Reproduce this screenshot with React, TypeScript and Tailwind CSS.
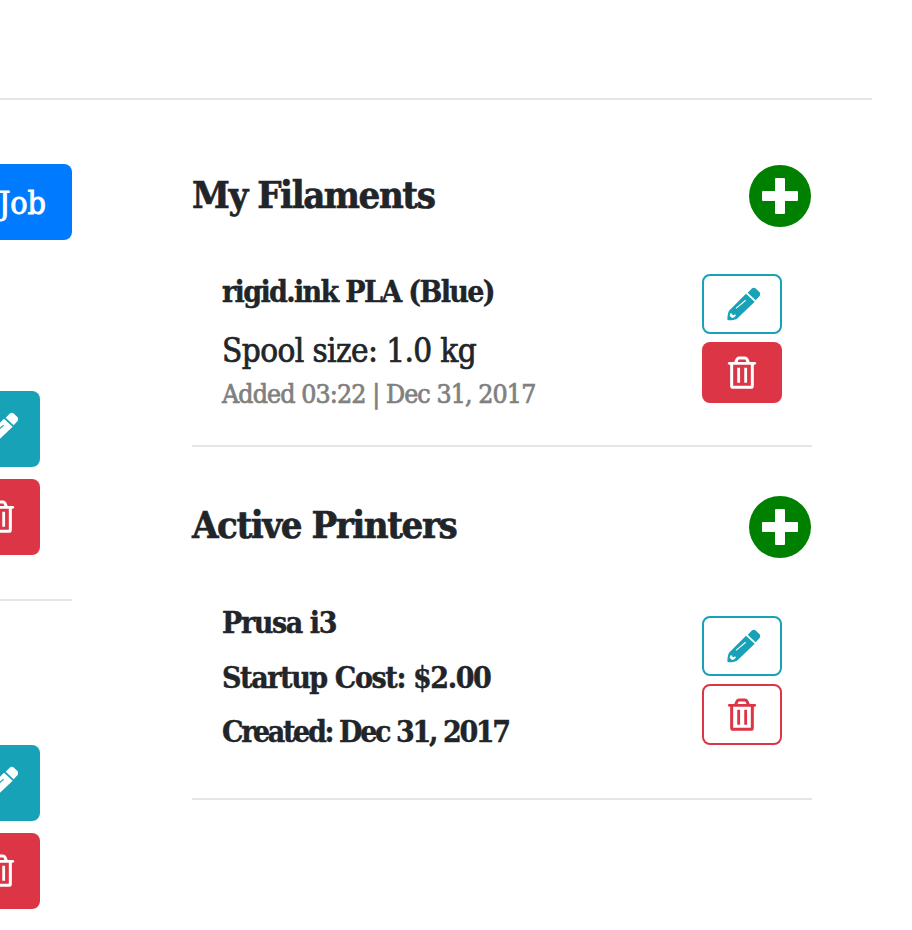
import type { ReactNode } from 'react';

function Pencil() {
  return (
    <svg viewBox="102 63 108 108" className="h-9 w-9 shrink-0" fill="currentColor">
      <path d="M173 83 L185 71 Q191 65 198 71 L208 81 Q214 87 208 94 L197 106 Z" />
      <path
        fillRule="evenodd"
        d="M168 86 L194 110 L141 161 Q136 165 117 166 Q112 166 112 162 Q113 144 117 137 Z M121 145 L119 152 L126 159 L133 157 L138 151 L135 148 L131 151 L127 150 L127 146 Z M137 129 L139 131.5 L168 107 L166 104 Z"
      />
    </svg>
  );
}

function Trash() {
  return (
    <svg viewBox="102 269 108 108" className="h-9 w-9 shrink-0" fill="none" stroke="currentColor">
      <path strokeWidth="9" strokeLinejoin="round" d="M137 292 L141 282 Q143 278 147 278 H165 Q169 278 171 282 L175 292 M125 294 V361 Q125 366 130 366 H182 Q187 366 187 361 V294" />
      <path strokeWidth="8.5" strokeLinecap="round" d="M118 294 H194" />
      <path strokeWidth="8.5" d="M146 307 V352 M167 307 V352" />
    </svg>
  );
}

function AddButton() {
  return (
    <button className="mr-px flex h-[62px] w-[62px] items-center justify-center rounded-full bg-[#008000]">
      <svg viewBox="0 0 36 36" className="h-9 w-9" fill="white">
        <rect x="13" y="0" width="10" height="36" rx="1" />
        <rect x="0" y="13" width="36" height="10" rx="1" />
      </svg>
    </button>
  );
}

function Action({ className, children }: { className: string; children: ReactNode }) {
  return <button className={`flex w-20 shrink-0 items-center justify-center rounded-lg ${className}`}>{children}</button>;
}

function JobActions({ className }: { className: string }) {
  return (
    <div className={`-ml-10 flex flex-col gap-3 ${className}`}>
      <Action className="h-[76px] bg-[#17a2b8] text-white"><Pencil /></Action>
      <Action className="h-[76px] bg-[#dc3545] text-white"><Trash /></Action>
    </div>
  );
}

function Line({ className, children }: { className: string; children: ReactNode }) {
  return <div className={`whitespace-nowrap ${className}`}>{children}</div>;
}

export default function App() {
  return (
    <div className="h-[930px] w-[912px] overflow-hidden bg-white font-['DejaVu_Serif_Condensed','DejaVu_Serif',serif] text-[#212529] [font-stretch:condensed]">
      <header className="mr-10 h-[100px] border-b-2 border-[#e5e5e5]" />
      <main className="flex">
        <aside className="w-[72px] shrink-0 pt-16">
          <button className="flex h-[76px] w-full items-center justify-end rounded-r-lg bg-[#007bff] pt-0.5 pr-[26px] text-[32px] text-white [-webkit-text-stroke:0.9px]">
            <span className="whitespace-nowrap">Job</span>
          </button>
          <JobActions className="mt-[151px]" />
          <hr className="mt-11 border-t-2 border-[#e5e5e5]" />
          <JobActions className="mt-36" />
        </aside>
        <div className="ml-[120px] w-[620px]">
          <section className="h-[347px] border-b-2 border-[#e5e5e5] pt-[65px]">
            <div className="flex h-[62px] items-center justify-between">
              <h2 className="pb-0.5 text-[38px] leading-[60px] font-bold tracking-[-1.45px] whitespace-nowrap [-webkit-text-stroke:0.6px]">My Filaments</h2>
              <AddButton />
            </div>
            <div className="mt-[47px] flex justify-between pr-[30px] pl-[30px]">
              <div>
                <Line className="h-9 text-[30px] leading-9 font-bold tracking-[-1.65px] [-webkit-text-stroke:0.4px]">rigid.ink PLA (Blue)</Line>
                <Line className="mt-[21px] h-10 text-[33px] leading-10 tracking-[-0.6px] [-webkit-text-stroke:0.7px]">Spool size: 1.0 kg</Line>
                <Line className="mt-[5px] h-9 text-[26.5px] leading-9 tracking-[-0.9px] text-[#808080] [-webkit-text-stroke:0.7px]">Added 03:22 | Dec 31, 2017</Line>
              </div>
              <div className="flex flex-col gap-2">
                <Action className="h-[60px] border-2 border-[#17a2b8] text-[#17a2b8]"><Pencil /></Action>
                <Action className="h-[61px] bg-[#dc3545] text-white"><Trash /></Action>
              </div>
            </div>
          </section>
          <section className="h-[353px] border-b-2 border-[#e5e5e5] pt-[49px]">
            <div className="flex h-[62px] items-center justify-between">
              <h2 className="pb-1 text-[38px] leading-[58px] font-bold tracking-[-1.45px] whitespace-nowrap [-webkit-text-stroke:0.6px]">Active Printers</h2>
              <AddButton />
            </div>
            <div className="mt-[47px] flex justify-between pr-[30px] pl-[30px]">
              <div className="flex flex-col gap-[18.5px] text-[30px] leading-9 font-bold tracking-[-1.4px] [-webkit-text-stroke:0.4px]">
                <Line className="h-9">Prusa i3</Line>
                <Line className="h-9">Startup Cost: $2.00</Line>
                <Line className="h-9 tracking-[-2.35px]">Created: Dec 31, 2017</Line>
              </div>
              <div className="mt-[11px] flex flex-col gap-2">
                <Action className="h-[60px] border-2 border-[#17a2b8] text-[#17a2b8]"><Pencil /></Action>
                <Action className="h-[61px] border-2 border-[#dc3545] text-[#dc3545]"><Trash /></Action>
              </div>
            </div>
          </section>
        </div>
      </main>
    </div>
  );
}
